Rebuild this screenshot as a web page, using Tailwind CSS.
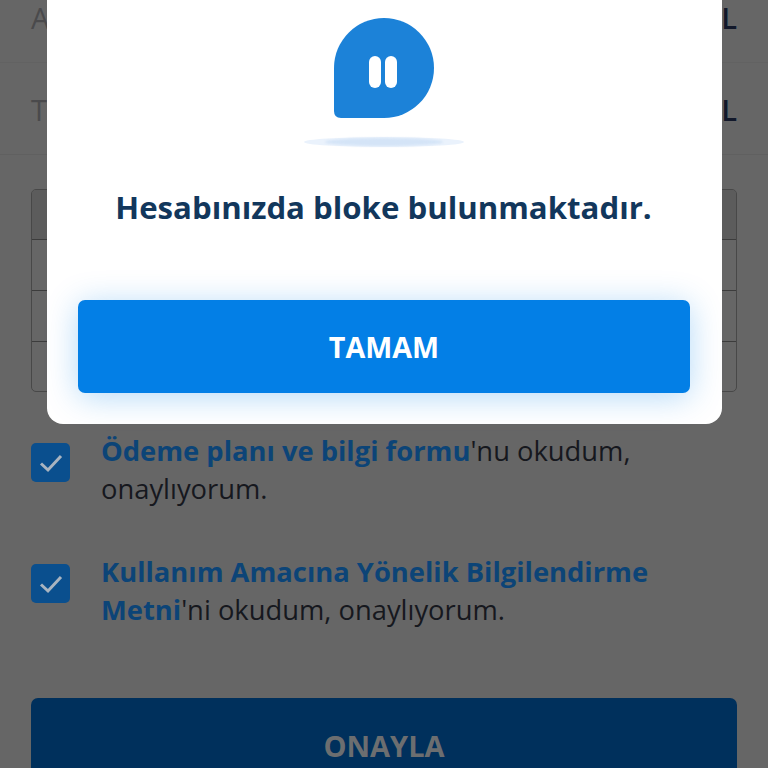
<!DOCTYPE html>
<html lang="tr">
<head>
    <meta charset="UTF-8">
    <meta name="viewport" content="width=device-width, initial-scale=1.0">
    <title>Hesap bloke</title>
    <script src="https://cdn.jsdelivr.net/npm/@tailwindcss/browser@4"></script>
</head>
<body class="bg-[#666666] font-['Open_Sans',sans-serif]">
<div class="relative w-[768px] h-[768px] overflow-hidden bg-[#666666]">

    <!-- page behind the dialog -->
    <div class="flex flex-col">
        <div class="h-[63px] pt-[1px] px-[31px] flex justify-between items-start border-b border-[#626262]">
            <span class="text-[29px] leading-[34px] text-[#4a4a4c]">A</span>
            <span class="text-[29px] leading-[34px] font-semibold text-[#12182a]">L</span>
        </div>
        <div class="h-[92px] pt-[30px] px-[31px] flex justify-between items-start border-b border-[#606060]">
            <span class="text-[29px] leading-[34px] text-[#4a4a4c]">T</span>
            <span class="text-[29px] leading-[34px] font-semibold text-[#12182a]">L</span>
        </div>

        <div class="mt-[34px] mx-[31px] h-[203px] border border-[#484848] rounded-[5px] flex flex-col overflow-hidden">
            <div class="h-[50px] bg-[#5c5c5c] border-b border-[#3c3c3c]"></div>
            <div class="h-[51px] border-b border-[#3c3c3c]"></div>
            <div class="h-[51px] border-b border-[#3c3c3c]"></div>
            <div class="flex-1"></div>
        </div>

        <div class="mt-[40px] ml-[31px] flex gap-[31px]">
            <div class="mt-[11px] w-[39px] h-[39px] shrink-0 rounded-[5px] bg-[#0a4f8e] flex items-center justify-center">
                <svg width="26" height="22" viewBox="0 0 26 22" fill="none" stroke="#a9b4c0" stroke-width="3"><path d="M3 11.5 L10 18 L23 4"/></svg>
            </div>
            <p class="text-[27.35px] leading-[38px] text-[#16181e]"><span class="font-bold text-[#0c4477]">Ödeme planı ve bilgi formu</span>'nu okudum,<br>onaylıyorum.</p>
        </div>

        <div class="mt-[45px] ml-[31px] flex gap-[31px]">
            <div class="mt-[11px] w-[39px] h-[39px] shrink-0 rounded-[5px] bg-[#0a4f8e] flex items-center justify-center">
                <svg width="26" height="22" viewBox="0 0 26 22" fill="none" stroke="#a9b4c0" stroke-width="3"><path d="M3 11.5 L10 18 L23 4"/></svg>
            </div>
            <p class="text-[27.35px] leading-[38px] text-[#16181e]"><span class="font-bold text-[#0c4477]">Kullanım Amacına Yönelik Bilgilendirme<br>Metni</span>'ni okudum, onaylıyorum.</p>
        </div>

        <div class="mt-[69px] mx-[31px] h-[100px] shrink-0 rounded-[7px] bg-[#00305c] flex justify-center pt-[29px]">
            <span class="text-[29px] leading-[38px] font-bold text-[#6c6e70]">ONAYLA</span>
        </div>
    </div>

    <!-- dialog -->
    <div class="absolute left-[47px] top-0 w-[675px] h-[424px] bg-white rounded-b-[16px] flex flex-col items-center pt-[18px]">
        <svg class="-ml-[2px]" width="100" height="100" viewBox="0 0 100 100">
            <path d="M50 0 A50 50 0 0 1 50 100 L7 100 Q0 100 0 93 L0 50 A50 50 0 0 1 50 0 Z" fill="#1c82d8"/>
            <rect x="35" y="38" width="12" height="32" rx="6" fill="#fff"/>
            <rect x="51" y="38" width="12" height="32" rx="6" fill="#fff"/>
        </svg>
        <div class="mt-[19px] -ml-[2px] w-[160px] h-[10px] rounded-[50%] bg-[#eaf2fc] flex items-center justify-center">
            <div class="w-[118px] h-[8px] rounded-[50%] bg-[#d4e4f7] blur-[1px]"></div>
        </div>
        <h1 class="mt-[38px] -ml-[2px] text-[31.2px] leading-[44px] font-bold text-[#12375c]">Hesabınızda bloke bulunmaktadır.</h1>
        <div class="mt-[71px] -ml-px w-[612px] h-[93px] rounded-[7px] bg-[#037fe6] shadow-[0_4px_32px_rgba(5,128,232,0.3)] flex items-center justify-center">
            <span class="text-[28.7px] font-bold text-white">TAMAM</span>
        </div>
    </div>
</div>
</body>
</html>
